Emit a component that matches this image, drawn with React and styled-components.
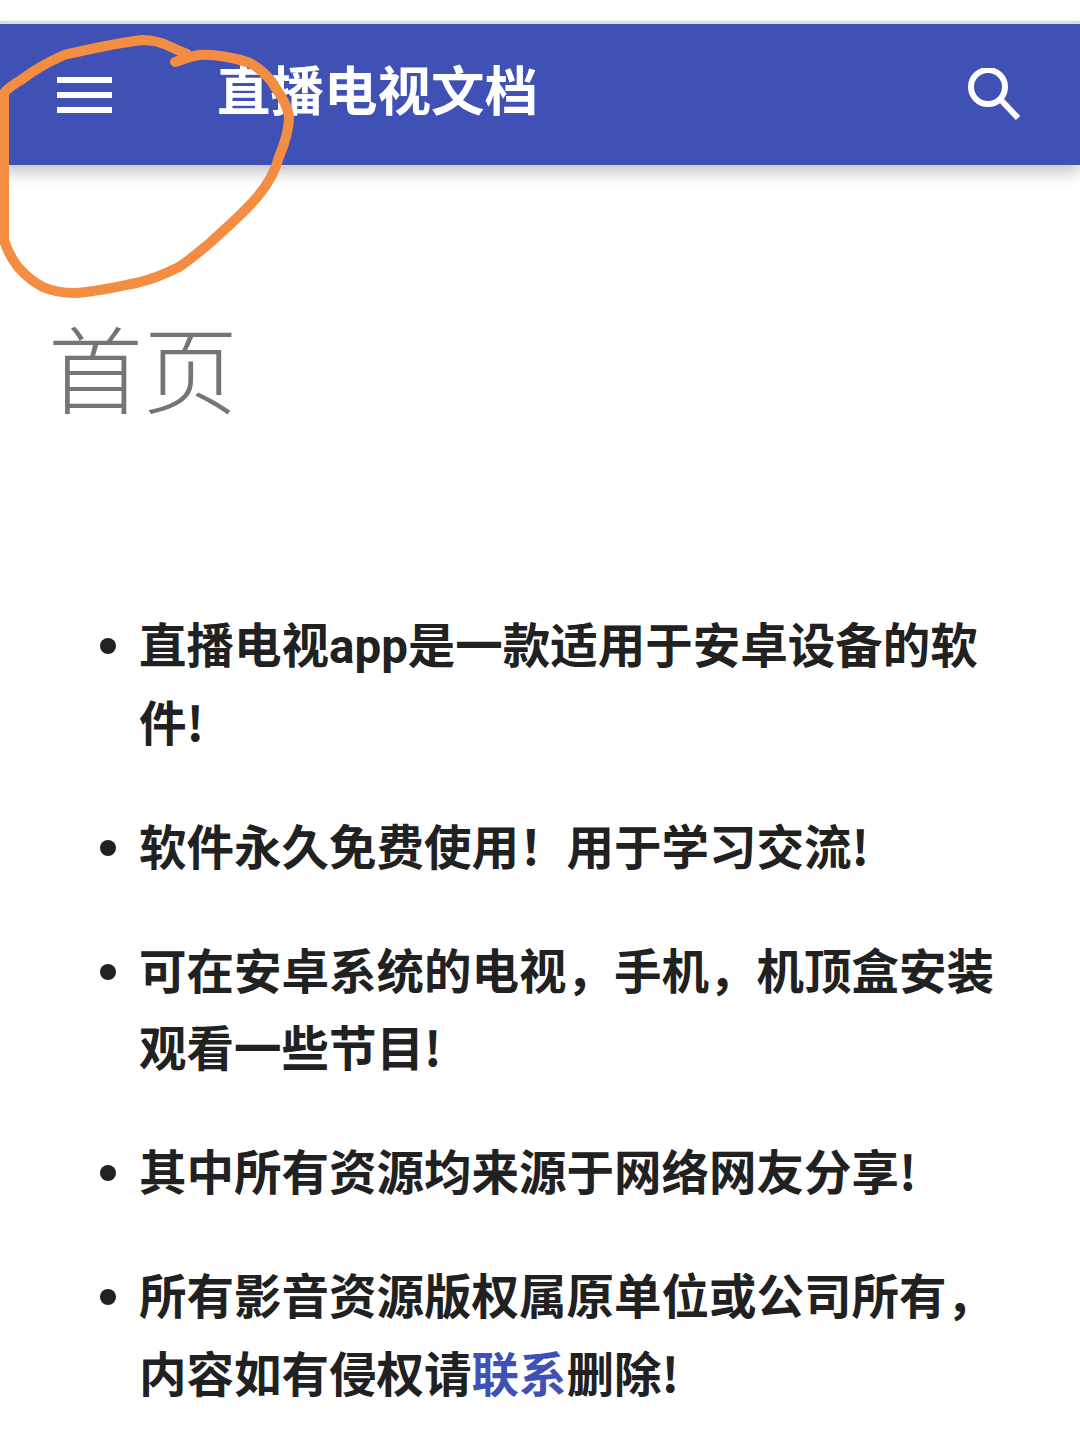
import styled, { createGlobalStyle } from 'styled-components'

const GlobalStyle = createGlobalStyle`
    html, body {
        margin: 0;
        background: #fff;
    }
    body {
        font-family: "Noto Sans CJK SC", Roboto, sans-serif;
    }
`

function App() {
    const items = [
        <>直播电视<Latin>app</Latin>是一款适用于安卓设备的软件!</>,
        <>软件永久免费使用！用于学习交流!</>,
        <>可在安卓系统的电视，手机，机顶盒安装观看一些节目!</>,
        <>其中所有资源均来源于网络网友分享!</>,
        <>所有影音资源版权属原单位或公司所有，内容如有侵权请<Link href="#">联系</Link>删除!</>,
    ]

    return (
        <Page>
            <GlobalStyle />

            <Header>
                <MenuIcon viewBox="0 0 55 36" aria-hidden="true">
                    <rect x="0" y="0" width="55" height="6" />
                    <rect x="0" y="15" width="55" height="6" />
                    <rect x="0" y="30" width="55" height="6" />
                </MenuIcon>
                <Title>直播电视文档</Title>
                <SearchIcon viewBox="0 0 54 54" aria-hidden="true">
                    <circle cx="20" cy="19" r="17" />
                    <path d="M32 31 L50 50" />
                </SearchIcon>
            </Header>

            <Heading>首页</Heading>

            <List>
                {items.map((item, i) => (
                    <Item key={i}>{item}</Item>
                ))}
            </List>

            {/* hand drawn marker ring on top of the screenshot */}
            <Scribble viewBox="0 0 300 300" aria-hidden="true">
                <path d="M175 62 C182 60 190 56 200 55 C215 54 236 58 250 63 C262 70 270 78 275 87 C283 98 288 108 289 117 C289 132 284 145 279 157 C275 172 268 184 258 196 C245 212 228 226 211 242 C200 251 190 260 179 267 C165 274 150 280 136 283 C116 287 95 292 75 293 C62 293 52 291 43 287 C33 282 25 275 18 267 C11 258 7 250 4 240 L4 93 C8 88 14 84 21 80 C34 70 48 62 64 55 C90 49 115 43 143 40 C153 40 163 43 171 47 C177 50 182 52 187 54" />
            </Scribble>
        </Page>
    )
}

export default App

const Page = styled.div`
    position: relative;
    width: 1080px;
    height: 1440px;
    overflow: hidden;
    background: #fff;
    padding-top: 21px;
    box-sizing: border-box;
`

const Header = styled.header`
    height: 141px;
    border-top: 3px solid #dcdcdc;
    background: #3f51b5;
    box-shadow: 0 8px 14px rgba(0, 0, 0, 0.22);
    display: flex;
    align-items: center;
    padding: 0 58px 0 57px;
`

const MenuIcon = styled.svg`
    width: 55px;
    height: 36px;
    fill: #fff;
    flex: none;
`

const Title = styled.div`
    flex: 1;
    margin-left: 105px;
    color: #fff;
    font-size: 53.5px;
    font-weight: 700;
    line-height: 1;
    transform: translateY(-7px);
`

const SearchIcon = styled.svg`
    width: 54px;
    height: 54px;
    fill: none;
    stroke: #fff;
    stroke-width: 6;
    flex: none;
`

const Heading = styled.h1`
    margin: 0;
    padding: 136px 0 0 48px;
    color: #757575;
    font-size: 95px;
    font-weight: 300;
    line-height: 130px;
`

const List = styled.ul`
    margin: 0;
    padding: 173px 70px 0 139px;
    list-style: none;
    color: #212121;
    font-size: 47.5px;
    font-weight: 700;
    line-height: 77.5px;
`

const Item = styled.li`
    position: relative;
    margin-bottom: 46.5px;

    &::before {
        content: "";
        position: absolute;
        left: -39px;
        top: 34px;
        width: 16px;
        height: 16px;
        border-radius: 50%;
        background: #212121;
    }
`

const Latin = styled.span`
    font-family: Roboto, sans-serif;
    line-height: 0;
`

const Link = styled.a`
    color: #3f51b5;
    text-decoration: none;
`

const Scribble = styled.svg`
    position: absolute;
    top: 0;
    left: 0;
    width: 300px;
    height: 300px;
    fill: none;
    stroke: #f28d42;
    stroke-width: 10;
    stroke-linecap: round;
    stroke-linejoin: round;
`
